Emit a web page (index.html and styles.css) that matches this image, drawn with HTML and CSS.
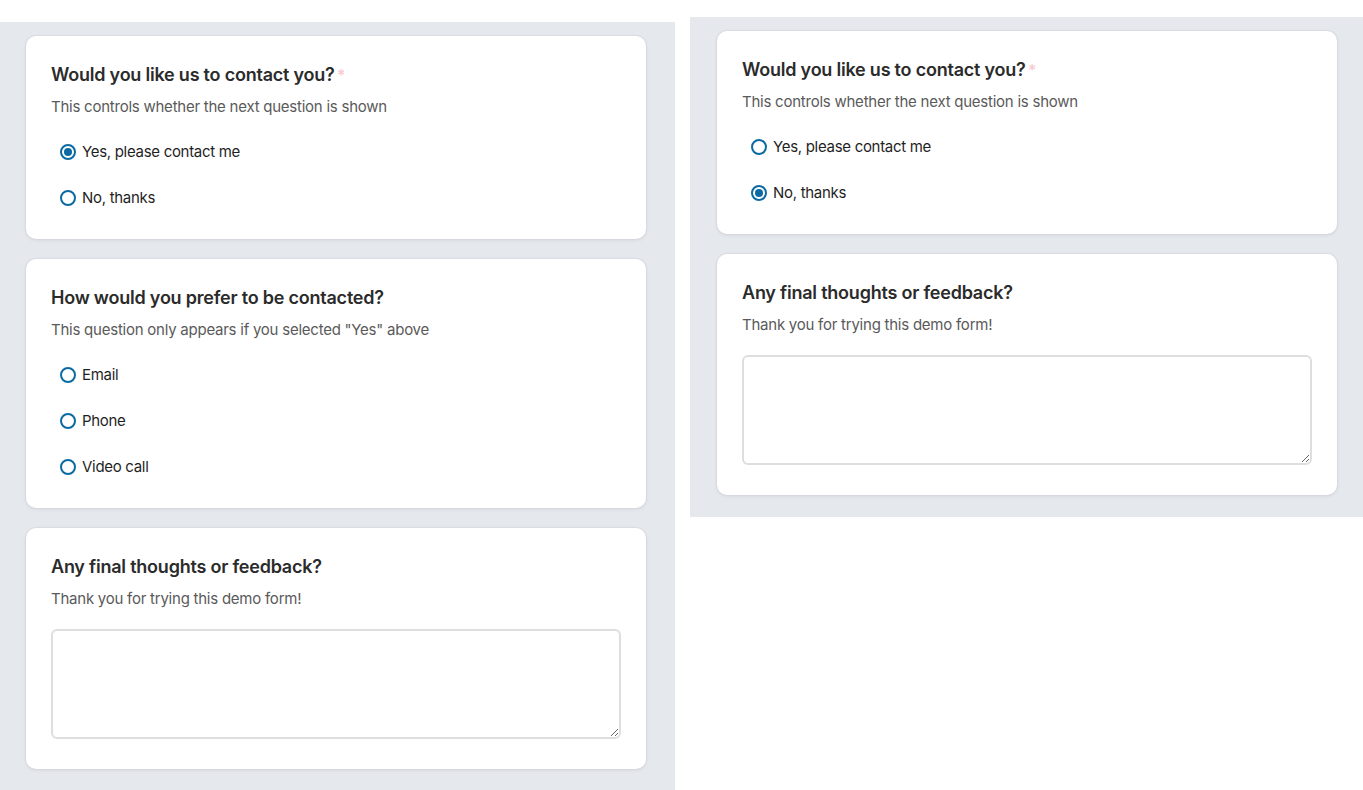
FILE: index.html
```html
<!DOCTYPE html>
<html lang="en">
<head>
<meta charset="utf-8">
<title>Conditional form demo</title>
<link rel="stylesheet" href="styles.css">
</head>
<body>
<div class="screens">
  <section class="screen screen-yes">
    <div class="card">
      <h2 class="q-title">Would you like us to contact you? <span class="req">*</span></h2>
      <p class="q-desc">This controls whether the next question is shown</p>
      <div class="options">
        <label class="option"><input type="radio" name="contact-a" checked><span>Yes, please contact me</span></label>
        <label class="option"><input type="radio" name="contact-a"><span>No, thanks</span></label>
      </div>
    </div>
    <div class="card">
      <h2 class="q-title">How would you prefer to be contacted?</h2>
      <p class="q-desc">This question only appears if you selected "Yes" above</p>
      <div class="options">
        <label class="option"><input type="radio" name="method-a"><span>Email</span></label>
        <label class="option"><input type="radio" name="method-a"><span>Phone</span></label>
        <label class="option"><input type="radio" name="method-a"><span>Video call</span></label>
      </div>
    </div>
    <div class="card card-text">
      <h2 class="q-title">Any final thoughts or feedback?</h2>
      <p class="q-desc">Thank you for trying this demo form!</p>
      <textarea class="answer"></textarea>
    </div>
  </section>

  <section class="screen screen-no">
    <div class="card">
      <h2 class="q-title">Would you like us to contact you? <span class="req">*</span></h2>
      <p class="q-desc">This controls whether the next question is shown</p>
      <div class="options">
        <label class="option"><input type="radio" name="contact-b"><span>Yes, please contact me</span></label>
        <label class="option"><input type="radio" name="contact-b" checked><span>No, thanks</span></label>
      </div>
    </div>
    <div class="card card-text">
      <h2 class="q-title">Any final thoughts or feedback?</h2>
      <p class="q-desc">Thank you for trying this demo form!</p>
      <textarea class="answer"></textarea>
    </div>
  </section>
</div>
</body>
</html>
```

FILE: styles.css
```css
* {
  box-sizing: border-box;
}

html, body {
  margin: 0;
  padding: 0;
  background: #ffffff;
}

body {
  font-family: Inter, "Helvetica Neue", Arial, sans-serif;
  color: #1f1f1f;
  height: 790px;
  overflow: hidden;
}

.screens {
  display: flex;
  align-items: flex-start;
}

.screen {
  background: #e5e8ec;
  display: flex;
  flex-direction: column;
  gap: 20px;
}

.screen-yes {
  width: 675px;
  margin-top: 22px;
  padding: 14px 29px 21px 26px;
}

.screen-no {
  width: 673px;
  margin-left: 15px;
  margin-top: 17px;
  padding: 14px 26px 22px 27px;
}

.card {
  background: #ffffff;
  border-radius: 10px;
  padding: 26px 25px 18px;
  box-shadow: 0 1px 4px rgba(30, 40, 60, 0.08), 0 0 0 1px rgba(30, 40, 60, 0.03);
}

.card-text {
  padding-bottom: 30px;
}

.q-title {
  margin: 0;
  font-size: 18px;
  line-height: 26px;
  font-weight: 600;
  letter-spacing: -0.22px;
  color: #2b2b2b;
}

.req {
  color: #f7c9cf;
  font-weight: 500;
  font-size: 16px;
  margin-left: -2px;
}

.q-desc {
  margin: 8px 0 0;
  font-size: 15px;
  line-height: 22px;
  letter-spacing: -0.24px;
  color: #5a5a5a;
}

.options {
  margin-top: 11px;
  display: flex;
  flex-direction: column;
}

.option {
  display: flex;
  align-items: center;
  gap: 6px;
  padding: 12px 9px;
  font-size: 15px;
  line-height: 22px;
  letter-spacing: -0.3px;
  color: #1f1f1f;
  cursor: pointer;
}

.option input {
  appearance: none;
  margin: 0;
  width: 16px;
  height: 16px;
  border: 2px solid #0b6aa2;
  border-radius: 50%;
  background: #ffffff;
  flex: none;
  display: grid;
  place-content: center;
}

.option input:checked::before {
  content: "";
  width: 8px;
  height: 8px;
  border-radius: 50%;
  background: #0b6aa2;
}

.answer {
  display: block;
  width: 100%;
  height: 110px;
  margin-top: 19px;
  border: 2px solid #dedede;
  border-radius: 6px;
  padding: 10px 12px;
  font: inherit;
  font-size: 15px;
  resize: vertical;
  background: #ffffff;
}
```
